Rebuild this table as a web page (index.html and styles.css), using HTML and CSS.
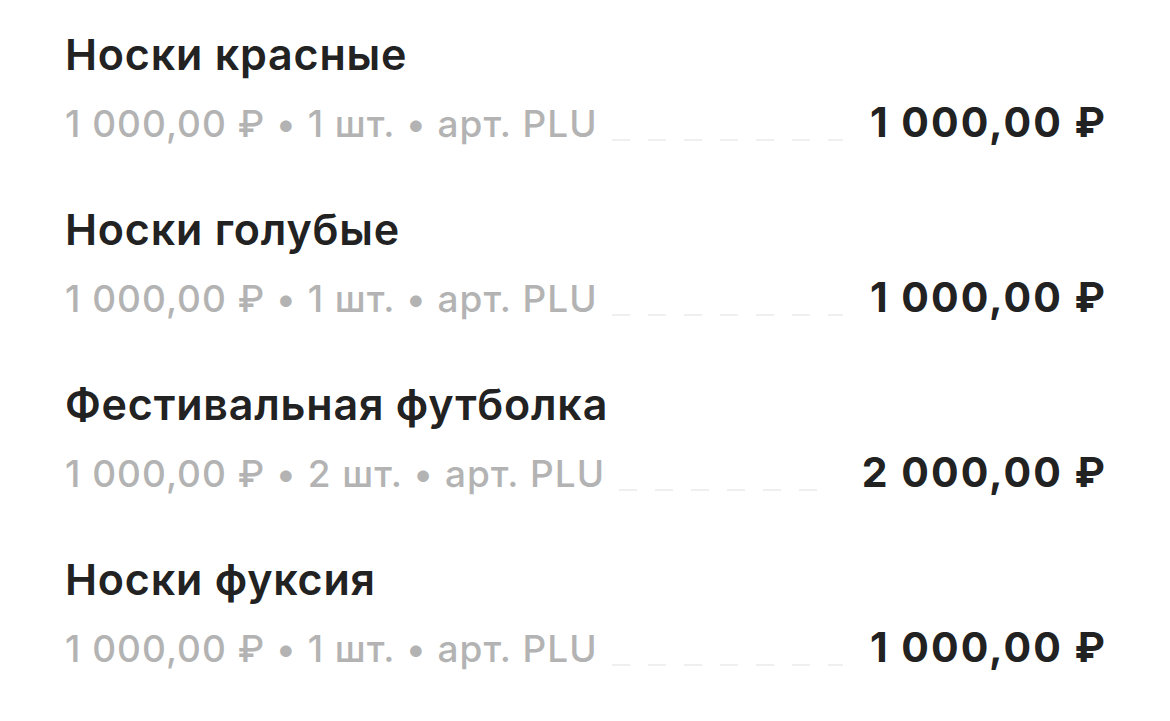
FILE: index.html
```html
<!DOCTYPE html>
<html lang="ru">
<head>
<meta charset="utf-8">
<link rel="stylesheet" href="styles.css">
</head>
<body>
<ul class="list">
  <li class="item">
    <div class="title">Носки красные</div>
    <div class="line">
      <span class="meta">1 000,00 ₽ • 1 шт. • арт. PLU</span>
      <span class="leader"></span>
      <span class="price">1 000,00 ₽</span>
    </div>
  </li>
  <li class="item">
    <div class="title">Носки голубые</div>
    <div class="line">
      <span class="meta">1 000,00 ₽ • 1 шт. • арт. PLU</span>
      <span class="leader"></span>
      <span class="price">1 000,00 ₽</span>
    </div>
  </li>
  <li class="item">
    <div class="title">Фестивальная футболка</div>
    <div class="line">
      <span class="meta">1 000,00 ₽ • 2 шт. • арт. PLU</span>
      <span class="leader"></span>
      <span class="price">2 000,00 ₽</span>
    </div>
  </li>
  <li class="item">
    <div class="title">Носки фуксия</div>
    <div class="line">
      <span class="meta">1 000,00 ₽ • 1 шт. • арт. PLU</span>
      <span class="leader"></span>
      <span class="price">1 000,00 ₽</span>
    </div>
  </li>
</ul>
</body>
</html>
```
FILE: styles.css
```css
html, body {
  margin: 0;
  padding: 0;
  background: #ffffff;
}
body {
  font-family: Inter, "Noto Sans", "Liberation Sans", sans-serif;
  color: #222222;
}
.list {
  list-style: none;
  margin: 0;
  padding: 28px 63px 0 65px;
  display: flex;
  flex-direction: column;
  gap: 57px;
}
.item {
  display: flex;
  flex-direction: column;
  gap: 20px;
}
.title {
  font-size: 43px;
  font-weight: 600;
  line-height: 52px;
  letter-spacing: 0.8px;
  white-space: nowrap;
}
.line {
  display: flex;
  align-items: baseline;
}
.meta {
  font-size: 37px;
  font-weight: 500;
  line-height: 44px;
  letter-spacing: 1px;
  color: #b3b3b3;
  white-space: nowrap;
}
.leader {
  flex: 1;
  align-self: flex-end;
  height: 2px;
  margin: 0 27px 5px 14px;
  background: repeating-linear-gradient(to right, #efefef 0 18px, transparent 18px 36px);
}
.price {
  font-size: 41px;
  font-weight: 700;
  line-height: 44px;
  letter-spacing: 2px;
  color: #222222;
  white-space: nowrap;
}
```
